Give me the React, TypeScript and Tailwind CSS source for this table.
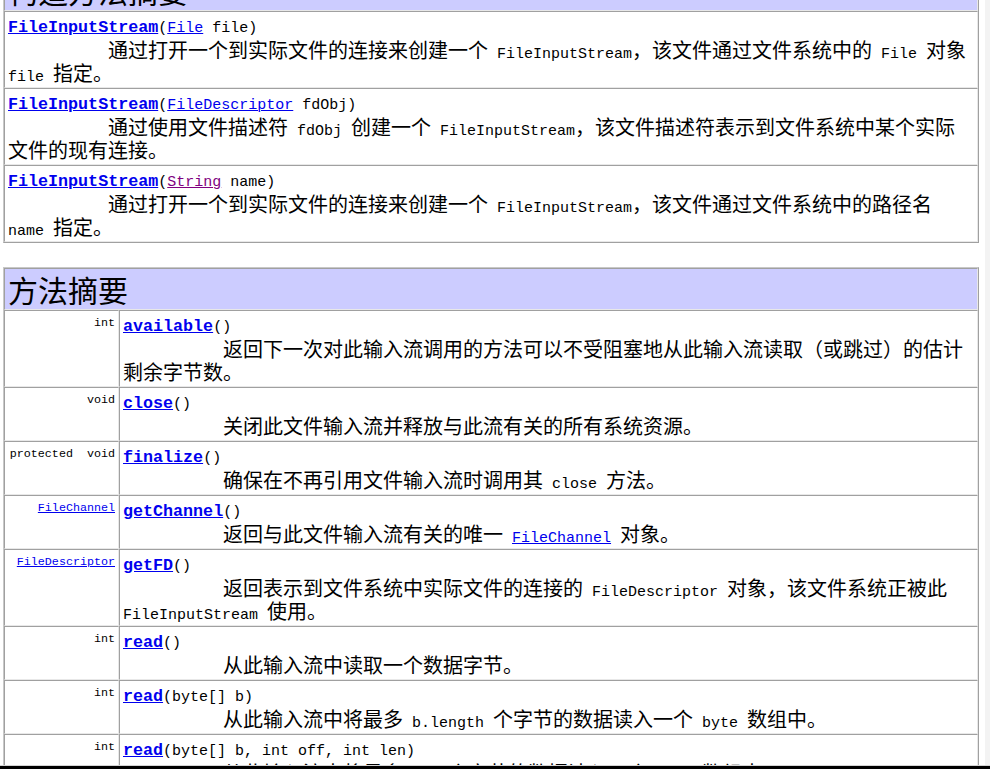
import React from "react";

type P = { children?: React.ReactNode };

function C({ children }: P) {
  return (
    <span className="font-['Liberation_Mono',monospace] text-[15px] leading-[13px]">
      {children}
    </span>
  );
}

function CL({ children, purple }: P & { purple?: boolean }) {
  return (
    <a
      className={
        purple
          ? "text-[#800080] underline decoration-1"
          : "text-[#0000ee] underline decoration-1"
      }
    >
      {children}
    </a>
  );
}

function Sig({ name, children }: P & { name: string }) {
  return (
    <div className="h-[23px] whitespace-nowrap pt-[4px] font-['Liberation_Mono',monospace] text-[15px] leading-[19px] text-black">
      <a className="font-bold text-[16.7px] leading-none text-[#0000ee] underline">
        {name}
      </a>
      {children}
    </div>
  );
}

function Desc({ children }: P) {
  return (
    <div className="indent-[100px] font-['Noto_Sans_CJK_SC',sans-serif] text-[20px] leading-[23px] text-black">
      {children}
    </div>
  );
}

function Heading({ children }: P) {
  return (
    <div className="border border-[#e8e8e8] border-t-[#a0a0a0] border-l-[#a0a0a0] bg-[#ccccff] px-[3px] py-[3px] font-['Noto_Sans_CJK_SC',serif] text-[30px] leading-[34px] text-black">
      {children}
    </div>
  );
}

function Table({ children }: P) {
  return (
    <div className="ml-[3px] w-[976px] border border-[#a0a0a0] border-t-[#c8c8c8] border-l-[#c8c8c8] bg-white">
      {children}
    </div>
  );
}

function CtorRow({ children }: P) {
  return (
    <div className="border border-[#e8e8e8] border-t-[#a0a0a0] border-l-[#a0a0a0] pt-[3px] pb-[3px] pl-[3px] pr-[5px]">
      {children}
    </div>
  );
}

function MethodRow({ type, children }: P & { type: React.ReactNode }) {
  return (
    <div className="flex">
      <div className="w-[115px] shrink-0 whitespace-nowrap border border-[#e8e8e8] border-t-[#a0a0a0] border-l-[#a0a0a0] pt-[5px] pb-[3px] px-[3px] text-right font-['Liberation_Mono',monospace] text-[11.7px] leading-[14px] text-black">
        {type}
      </div>
      <div className="min-w-0 flex-1 border border-[#e8e8e8] border-t-[#a0a0a0] border-l-[#a0a0a0] pt-[3px] pb-[3px] pl-[3px] pr-[5px]">
        {children}
      </div>
    </div>
  );
}

export default function App() {
  return (
    <div className="flex h-[769px] w-[990px] flex-col overflow-hidden bg-white">
      <div className="flex min-h-0 flex-1">
        <div className="min-w-0 flex-1 overflow-hidden">
          <div className="-mt-[32px]">
            <Table>
              <Heading>构造方法摘要</Heading>
              <CtorRow>
                <Sig name="FileInputStream">
                  (<CL>File</CL> file)
                </Sig>
                <Desc>
                  通过打开一个到实际文件的连接来创建一个<C>{" FileInputStream"}</C>，该文件通过文件系统中的<C>{" File "}</C>对象<C>{" file "}</C>指定。
                </Desc>
              </CtorRow>
              <CtorRow>
                <Sig name="FileInputStream">
                  (<CL>FileDescriptor</CL> fdObj)
                </Sig>
                <Desc>
                  通过使用文件描述符<C>{" fdObj "}</C>创建一个<C>{" FileInputStream"}</C>
                  <span>，该文件描述符表示到文件系统中某个实际</span>
                  <span>文件的现有连接。</span>
                </Desc>
              </CtorRow>
              <CtorRow>
                <Sig name="FileInputStream">
                  (<CL purple>String</CL> name)
                </Sig>
                <Desc>
                  通过打开一个到实际文件的连接来创建一个<C>{" FileInputStream"}</C>，该文件通过文件系统中的路径名<C>{" name "}</C>指定。
                </Desc>
              </CtorRow>
            </Table>

            <div className="h-[24px]" />

            <Table>
              <Heading>方法摘要</Heading>
              <MethodRow type="int">
                <Sig name="available">()</Sig>
                <Desc>
                  返回下一次对此输入流调用的方法可以不受阻塞地从此输入流读取（或跳过）的估计剩余字节数。
                </Desc>
              </MethodRow>
              <MethodRow type="void">
                <Sig name="close">()</Sig>
                <Desc>关闭此文件输入流并释放与此流有关的所有系统资源。</Desc>
              </MethodRow>
              <MethodRow type={"protected\u00a0 void"}>
                <Sig name="finalize">()</Sig>
                <Desc>
                  确保在不再引用文件输入流时调用其<C>{" close "}</C>方法。
                </Desc>
              </MethodRow>
              <MethodRow type={<CL>FileChannel</CL>}>
                <Sig name="getChannel">()</Sig>
                <Desc>
                  返回与此文件输入流有关的唯一<C>{" "}</C>
                  <C>
                    <CL>FileChannel</CL>
                  </C>
                  <C>{" "}</C>对象。
                </Desc>
              </MethodRow>
              <MethodRow type={<CL>FileDescriptor</CL>}>
                <Sig name="getFD">()</Sig>
                <Desc>
                  返回表示到文件系统中实际文件的连接的<C>{" FileDescriptor "}</C>对象，该文件系统正被此<C>{"FileInputStream "}</C>使用。
                </Desc>
              </MethodRow>
              <MethodRow type="int">
                <Sig name="read">()</Sig>
                <Desc>从此输入流中读取一个数据字节。</Desc>
              </MethodRow>
              <MethodRow type="int">
                <Sig name="read">(byte[] b)</Sig>
                <Desc>
                  从此输入流中将最多<C>{" b.length "}</C>个字节的数据读入一个<C>{" byte "}</C>数组中。
                </Desc>
              </MethodRow>
              <MethodRow type="int">
                <Sig name="read">(byte[] b, int off, int len)</Sig>
                <Desc>
                  从此输入流中将最多<C>{" len "}</C>个字节的数据读入一个<C>{" byte "}</C>数组中。
                </Desc>
              </MethodRow>
            </Table>
          </div>
        </div>
        <div className="w-[5px] shrink-0 bg-[#f3f3f3]" />
      </div>
      <div className="h-px shrink-0 bg-[#d4d4d4]" />
      <div className="h-[3px] shrink-0 bg-black" />
    </div>
  );
}
